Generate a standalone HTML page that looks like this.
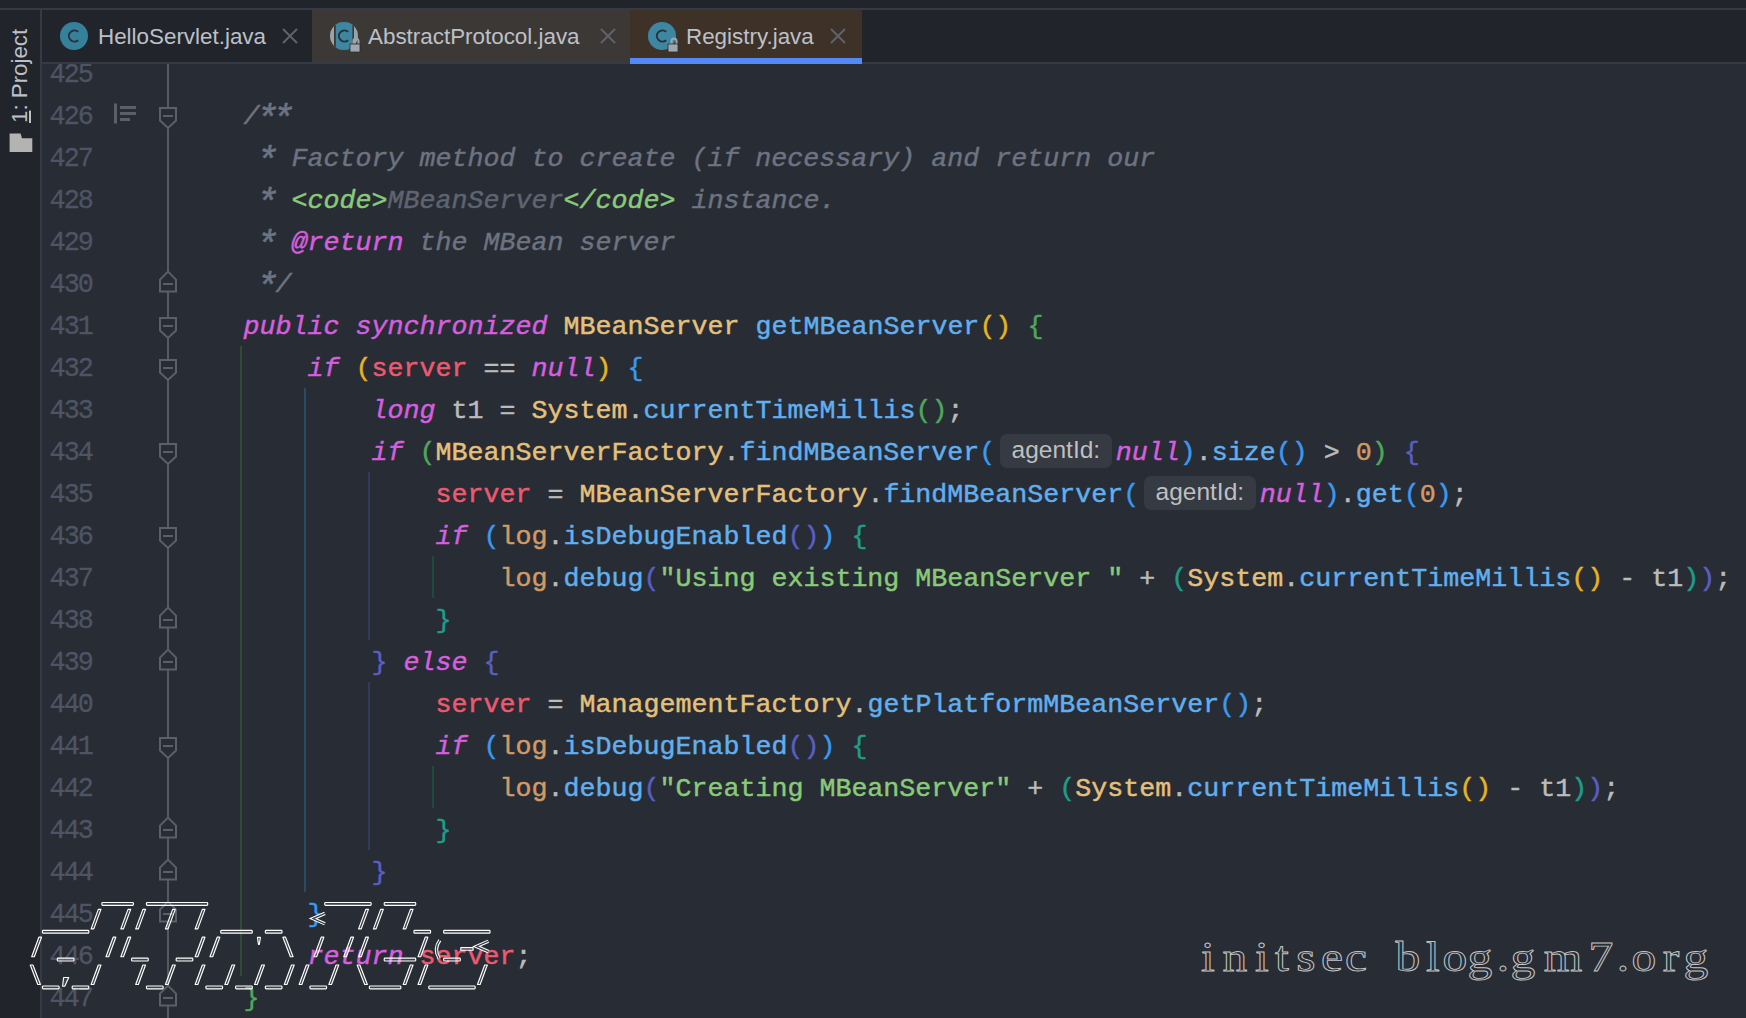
<!DOCTYPE html>
<html><head><meta charset="utf-8">
<style>

html,body{margin:0;padding:0}
body{width:1746px;height:1018px;overflow:hidden;background:#282c34;position:relative;font-family:"Liberation Sans",sans-serif}
.a{position:absolute}
.ln{left:42px;width:50px;text-align:right;font-family:"Liberation Mono",monospace;font-size:26.8px;letter-spacing:-1.9px;color:#4d5464;-webkit-text-stroke:0.3px currentColor;height:42px;line-height:42px}
.code{left:179.5px;height:42px;line-height:42px;font-family:"Liberation Mono",monospace;font-size:26.6667px;white-space:pre;color:#bbbbbb;-webkit-text-stroke:0.45px currentColor}
.kw{color:#d55fde;font-style:italic}
.cm{color:#6d7380;font-style:italic}
.ast{display:inline-block;transform:translateY(3.5px) scale(1.4)}
.cm2{color:#5e6470;font-style:italic}
.cl{color:#e5c07b}
.fn{color:#61afef}
.fd{color:#ef596f}
.st{color:#d19a66}
.num{color:#d19a66}
.str{color:#89ca78}
.tag{color:#89ca78;font-style:italic}
.b1{color:#e6b422}
.b2{color:#4ea85a}
.b3{color:#3a9af0}
.b4{color:#5a5fc4}
.b5{color:#1e9e8a}
.hint{display:inline-block;position:relative;width:120.5px;height:42px;vertical-align:top}
.hint span{position:absolute;left:4.5px;top:2px;width:112px;height:34px;border-radius:7px;background:#353a43;color:#bfbfbf;font-family:"Liberation Sans",sans-serif;font-size:24.5px;line-height:32px;text-align:center;font-style:normal;-webkit-text-stroke:0}
.tabtxt{top:11px;height:52px;line-height:52px;font-size:22.4px;color:#bcc0c9;white-space:pre}

.art{font-family:"Liberation Mono",monospace;font-size:24.67px;line-height:27.9px;white-space:pre;color:#2a2d33;-webkit-text-stroke:1.4px #ffffff}
.wmc{top:0;width:40px;text-align:center;transform:scaleX(1.18);font-family:"Liberation Serif",serif;font-size:42px;line-height:60px;color:rgba(40,44,52,0.2);-webkit-text-stroke:0.9px #c4c4c4}

</style></head><body>
<div class="a ln" style="top:54px">425</div>
<div class="a ln" style="top:96px">426</div>
<div class="a ln" style="top:138px">427</div>
<div class="a ln" style="top:180px">428</div>
<div class="a ln" style="top:222px">429</div>
<div class="a ln" style="top:264px">430</div>
<div class="a ln" style="top:306px">431</div>
<div class="a ln" style="top:348px">432</div>
<div class="a ln" style="top:390px">433</div>
<div class="a ln" style="top:432px">434</div>
<div class="a ln" style="top:474px">435</div>
<div class="a ln" style="top:516px">436</div>
<div class="a ln" style="top:558px">437</div>
<div class="a ln" style="top:600px">438</div>
<div class="a ln" style="top:642px">439</div>
<div class="a ln" style="top:684px">440</div>
<div class="a ln" style="top:726px">441</div>
<div class="a ln" style="top:768px">442</div>
<div class="a ln" style="top:810px">443</div>
<div class="a ln" style="top:852px">444</div>
<div class="a ln" style="top:894px">445</div>
<div class="a ln" style="top:936px">446</div>
<div class="a ln" style="top:978px">447</div>
<div class="a code" style="top:54px"></div>
<div class="a code" style="top:96px"><span class="cm">    /<span class="ast">*</span><span class="ast">*</span></span></div>
<div class="a code" style="top:138px"><span class="cm">     <span class="ast">*</span> Factory method to create (if necessary) and return our</span></div>
<div class="a code" style="top:180px"><span class="cm">     <span class="ast">*</span> </span><span class="tag">&lt;code&gt;</span><span class="cm2">MBeanServer</span><span class="tag">&lt;/code&gt;</span><span class="cm"> instance.</span></div>
<div class="a code" style="top:222px"><span class="cm">     <span class="ast">*</span> </span><span class="kw">@return</span><span class="cm"> the MBean server</span></div>
<div class="a code" style="top:264px"><span class="cm">     <span class="ast">*</span>/</span></div>
<div class="a code" style="top:306px">    <span class="kw">public</span> <span class="kw">synchronized</span> <span class="cl">MBeanServer</span> <span class="fn">getMBeanServer</span><span class="b1">()</span> <span class="b2">{</span></div>
<div class="a code" style="top:348px">        <span class="kw">if</span> <span class="b1">(</span><span class="fd">server</span> == <span class="kw">null</span><span class="b1">)</span> <span class="b3">{</span></div>
<div class="a code" style="top:390px">            <span class="kw">long</span> t1 = <span class="cl">System</span>.<span class="fn">currentTimeMillis</span><span class="b2">()</span>;</div>
<div class="a code" style="top:432px">            <span class="kw">if</span> <span class="b2">(</span><span class="cl">MBeanServerFactory</span>.<span class="fn">findMBeanServer</span><span class="b3">(</span><span class="hint"><span>agentId:</span></span><span class="kw">null</span><span class="b3">)</span>.<span class="fn">size</span><span class="b3">()</span> &gt; <span class="num">0</span><span class="b2">)</span> <span class="b4">{</span></div>
<div class="a code" style="top:474px">                <span class="fd">server</span> = <span class="cl">MBeanServerFactory</span>.<span class="fn">findMBeanServer</span><span class="b3">(</span><span class="hint"><span>agentId:</span></span><span class="kw">null</span><span class="b3">)</span>.<span class="fn">get</span><span class="b3">(</span><span class="num">0</span><span class="b3">)</span>;</div>
<div class="a code" style="top:516px">                <span class="kw">if</span> <span class="b3">(</span><span class="st">log</span>.<span class="fn">isDebugEnabled</span><span class="b4">()</span><span class="b3">)</span> <span class="b5">{</span></div>
<div class="a code" style="top:558px">                    <span class="st">log</span>.<span class="fn">debug</span><span class="b4">(</span><span class="str">"Using existing MBeanServer "</span> + <span class="b5">(</span><span class="cl">System</span>.<span class="fn">currentTimeMillis</span><span class="b1">()</span> - t1<span class="b5">)</span><span class="b4">)</span>;</div>
<div class="a code" style="top:600px">                <span class="b5">}</span></div>
<div class="a code" style="top:642px">            <span class="b4">}</span> <span class="kw">else</span> <span class="b4">{</span></div>
<div class="a code" style="top:684px">                <span class="fd">server</span> = <span class="cl">ManagementFactory</span>.<span class="fn">getPlatformMBeanServer</span><span class="b3">()</span>;</div>
<div class="a code" style="top:726px">                <span class="kw">if</span> <span class="b3">(</span><span class="st">log</span>.<span class="fn">isDebugEnabled</span><span class="b4">()</span><span class="b3">)</span> <span class="b5">{</span></div>
<div class="a code" style="top:768px">                    <span class="st">log</span>.<span class="fn">debug</span><span class="b4">(</span><span class="str">"Creating MBeanServer"</span> + <span class="b5">(</span><span class="cl">System</span>.<span class="fn">currentTimeMillis</span><span class="b1">()</span> - t1<span class="b5">)</span><span class="b4">)</span>;</div>
<div class="a code" style="top:810px">                <span class="b5">}</span></div>
<div class="a code" style="top:852px">            <span class="b4">}</span></div>
<div class="a code" style="top:894px">        <span class="b3">}</span></div>
<div class="a code" style="top:936px">        <span class="kw">return</span> <span class="fd">server</span>;</div>
<div class="a code" style="top:978px">    <span class="b2">}</span></div>
<div class="a" style="left:167px;top:64px;width:2px;height:954px;background:#555a62"></div>
<svg class="a" style="left:0;top:0" width="1746" height="1018">
<path d="M160,108 H176 V120.5 L168,128 L160,120.5 Z" fill="#282c34" stroke="#5b6068" stroke-width="2"/>
<rect x="163" y="115" width="10" height="2" fill="#5b6068"/>
<path d="M160,318 H176 V330.5 L168,338 L160,330.5 Z" fill="#282c34" stroke="#5b6068" stroke-width="2"/>
<rect x="163" y="325" width="10" height="2" fill="#5b6068"/>
<path d="M160,360 H176 V372.5 L168,380 L160,372.5 Z" fill="#282c34" stroke="#5b6068" stroke-width="2"/>
<rect x="163" y="367" width="10" height="2" fill="#5b6068"/>
<path d="M160,444 H176 V456.5 L168,464 L160,456.5 Z" fill="#282c34" stroke="#5b6068" stroke-width="2"/>
<rect x="163" y="451" width="10" height="2" fill="#5b6068"/>
<path d="M160,528 H176 V540.5 L168,548 L160,540.5 Z" fill="#282c34" stroke="#5b6068" stroke-width="2"/>
<rect x="163" y="535" width="10" height="2" fill="#5b6068"/>
<path d="M160,738 H176 V750.5 L168,758 L160,750.5 Z" fill="#282c34" stroke="#5b6068" stroke-width="2"/>
<rect x="163" y="745" width="10" height="2" fill="#5b6068"/>
<path d="M168,271.6 L176,279.6 V291.6 H160 V279.6 Z" fill="#282c34" stroke="#5b6068" stroke-width="2"/>
<rect x="163" y="283" width="10" height="2" fill="#5b6068"/>
<path d="M168,607.6 L176,615.6 V627.6 H160 V615.6 Z" fill="#282c34" stroke="#5b6068" stroke-width="2"/>
<rect x="163" y="619" width="10" height="2" fill="#5b6068"/>
<path d="M168,649.6 L176,657.6 V669.6 H160 V657.6 Z" fill="#282c34" stroke="#5b6068" stroke-width="2"/>
<rect x="163" y="661" width="10" height="2" fill="#5b6068"/>
<path d="M168,817.6 L176,825.6 V837.6 H160 V825.6 Z" fill="#282c34" stroke="#5b6068" stroke-width="2"/>
<rect x="163" y="829" width="10" height="2" fill="#5b6068"/>
<path d="M168,859.6 L176,867.6 V879.6 H160 V867.6 Z" fill="#282c34" stroke="#5b6068" stroke-width="2"/>
<rect x="163" y="871" width="10" height="2" fill="#5b6068"/>
<path d="M168,901.6 L176,909.6 V921.6 H160 V909.6 Z" fill="#282c34" stroke="#5b6068" stroke-width="2"/>
<rect x="163" y="913" width="10" height="2" fill="#5b6068"/>
<path d="M168,985.6 L176,993.6 V1005.6 H160 V993.6 Z" fill="#282c34" stroke="#5b6068" stroke-width="2"/>
<rect x="163" y="997" width="10" height="2" fill="#5b6068"/>
<rect x="114" y="103.5" width="3" height="20" fill="#5b6068"/>
<rect x="120" y="106" width="16" height="3" fill="#5b6068"/>
<rect x="120" y="112" width="16" height="3" fill="#5b6068"/>
<rect x="120" y="118" width="10" height="3" fill="#5b6068"/>
<rect x="240" y="346" width="2" height="630" fill="#304a36"/>
<rect x="304" y="388" width="2" height="504" fill="#2b4a63"/>
<rect x="368" y="472" width="2" height="168" fill="#33395a"/>
<rect x="368" y="682" width="2" height="168" fill="#33395a"/>
<rect x="432" y="556" width="2" height="42" fill="#21483f"/>
<rect x="432" y="766" width="2" height="42" fill="#21483f"/>
</svg>

<div class="a" style="left:0;top:0;width:1746px;height:8px;background:#21252b"></div>
<div class="a" style="left:0;top:8px;width:1746px;height:2px;background:#363a44"></div>
<div class="a" style="left:0;top:10px;width:40px;height:1008px;background:#21252b"></div>
<div class="a" style="left:40px;top:10px;width:2px;height:1008px;background:#363a44"></div>
<div class="a" style="left:42px;top:10px;width:1704px;height:52px;background:#21252b"></div>
<div class="a" style="left:42px;top:62px;width:1704px;height:2px;background:#363a44"></div>
<div class="a" style="left:312px;top:10px;width:318px;height:52px;background:#3b3835"></div>
<div class="a" style="left:630px;top:10px;width:232px;height:52px;background:#3d3128"></div>
<div class="a" style="left:630px;top:58px;width:232px;height:6px;background:#548af7"></div>
<div class="a tabtxt" style="left:98px">HelloServlet.java</div>
<div class="a tabtxt" style="left:368px">AbstractProtocol.java</div>
<div class="a tabtxt" style="left:686px">Registry.java</div>
<svg class="a" style="left:0;top:0" width="1746" height="64">
 <g stroke="#5f6369" stroke-width="2">
  <path d="M283,29 L297,43 M297,29 L283,43"/>
  <path d="M601,29 L615,43 M615,29 L601,43"/>
  <path d="M831,29 L845,43 M845,29 L831,43"/>
 </g>
 <!-- tab1 icon -->
 <circle cx="74" cy="36" r="14" fill="#35819c"/>
 <path d="M78.2,31.8 A5.6,5.6 0 1 0 78.2,40.2" fill="none" stroke="#2b3036" stroke-width="2"/>
 <!-- tab2 icon abstract -->
 <clipPath id="cp2"><circle cx="344" cy="36" r="14"/></clipPath>
 <g clip-path="url(#cp2)">
  <rect x="329" y="21" width="30" height="30" fill="#9aa3a9"/>
  <rect x="334" y="21" width="20" height="30" fill="#3b3835"/>
  <rect x="335.8" y="21" width="16.6" height="30" fill="#3d87a2"/>
 </g>
 <path d="M348.2,31.8 A5.6,5.6 0 1 0 348.2,40.2" fill="none" stroke="#2b3036" stroke-width="2"/>
 <path d="M353.5,44 V41 A2.5,2.5 0 0 1 358.5,41 V44" fill="none" stroke="#9ea7ae" stroke-width="2"/>
 <rect x="350" y="44" width="10" height="8" fill="#9ea7ae" stroke="#2d2d2d" stroke-width="0.8"/>
 <!-- tab3 icon -->
 <circle cx="662" cy="36" r="14" fill="#3d87a2"/>
 <path d="M666.2,31.8 A5.6,5.6 0 1 0 666.2,40.2" fill="none" stroke="#2b3036" stroke-width="2"/>
 <path d="M671.5,44 V41 A2.5,2.5 0 0 1 676.5,41 V44" fill="none" stroke="#9ea7ae" stroke-width="2"/>
 <rect x="668" y="44" width="10" height="8" fill="#9ea7ae" stroke="#2d2d2d" stroke-width="0.8"/>
</svg>
<div class="a" style="left:6.5px;top:123px;width:100px;height:26px;line-height:26px;transform-origin:0 0;transform:rotate(-90deg);font-size:22.3px;color:#bcc0c9;white-space:pre"><span style="text-decoration:underline">1</span>: Project</div>
<svg class="a" style="left:0;top:120px" width="40" height="40">
 <path d="M9.6,13.5 H20.6 L22,18.3 H32.3 V32 H9.6 Z" fill="#b3b3b3"/>
</svg>

<svg class="a" style="left:0;top:0" width="1746" height="1018">
<g fill="rgba(255,255,255,0.10)" stroke="#ffffff" stroke-width="1.15" stroke-linejoin="round">
<rect x="101.88" y="902.48" width="31.51" height="2.85" rx="0.8"/>
<rect x="146.45" y="902.48" width="61.23" height="2.85" rx="0.8"/>
<rect x="324.77" y="902.48" width="46.37" height="2.85" rx="0.8"/>
<rect x="384.21" y="902.48" width="31.51" height="2.85" rx="0.8"/>
<rect x="42.44" y="930.33" width="46.37" height="2.85" rx="0.8"/>
<polygon points="91.11,928.92 93.77,928.92 100.96,909.38 98.31,909.38"/>
<polygon points="120.83,928.92 123.48,928.92 130.69,909.38 128.03,909.38"/>
<polygon points="135.69,928.92 138.34,928.92 145.54,909.38 142.89,909.38"/>
<polygon points="165.41,928.92 168.07,928.92 175.27,909.38 172.62,909.38"/>
<polygon points="195.13,928.92 197.78,928.92 204.98,909.38 202.33,909.38"/>
<rect x="220.75" y="930.33" width="31.51" height="2.85" rx="0.8"/>
<rect x="265.33" y="930.33" width="16.65" height="2.85" rx="0.8"/>
<path d="M324.94,913.40 L312.94,918.60 L324.94,923.80" fill="none" stroke="#ffffff" stroke-width="3.4" stroke-linejoin="miter"/>
<path d="M324.94,913.40 L312.94,918.60 L324.94,923.80" fill="none" stroke="#3b3f48" stroke-width="1.3" stroke-linejoin="miter"/>
<polygon points="358.59,928.92 361.24,928.92 368.44,909.38 365.79,909.38"/>
<polygon points="373.45,928.92 376.10,928.92 383.31,909.38 380.65,909.38"/>
<polygon points="403.18,928.92 405.82,928.92 413.03,909.38 410.38,909.38"/>
<rect x="413.94" y="930.33" width="16.65" height="2.85" rx="0.8"/>
<rect x="443.65" y="930.33" width="46.37" height="2.85" rx="0.8"/>
<polygon points="31.68,956.73 34.32,956.73 41.52,937.18 38.88,937.18"/>
<rect x="57.30" y="958.18" width="16.65" height="2.85" rx="0.8"/>
<polygon points="105.97,956.73 108.62,956.73 115.82,937.18 113.17,937.18"/>
<polygon points="120.83,956.73 123.48,956.73 130.69,937.18 128.03,937.18"/>
<rect x="131.59" y="958.18" width="16.65" height="2.85" rx="0.8"/>
<rect x="176.17" y="958.18" width="16.65" height="2.85" rx="0.8"/>
<polygon points="195.13,956.73 197.78,956.73 204.98,937.18 202.33,937.18"/>
<polygon points="209.99,956.73 212.65,956.73 219.84,937.18 217.19,937.18"/>
<polygon points="257.47,937.38 260.43,937.38 259.32,944.42 258.47,944.42"/>
<polygon points="282.89,937.18 285.55,937.18 293.05,956.73 290.39,956.73"/>
<polygon points="314.01,956.73 316.66,956.73 323.87,937.18 321.21,937.18"/>
<polygon points="343.74,956.73 346.38,956.73 353.59,937.18 350.94,937.18"/>
<polygon points="358.59,956.73 361.24,956.73 368.44,937.18 365.79,937.18"/>
<rect x="384.21" y="958.18" width="31.51" height="2.85" rx="0.8"/>
<polygon points="418.04,956.73 420.69,956.73 427.89,937.18 425.24,937.18"/>
<path d="M439.82,940.20 Q433.22,949.40 439.22,958.60" fill="none" stroke="#ffffff" stroke-width="3.4"/>
<path d="M439.82,940.20 Q433.22,949.40 439.22,958.60" fill="none" stroke="#3b3f48" stroke-width="1.3"/>
<rect x="443.65" y="958.18" width="16.65" height="2.85" rx="0.8"/>
<rect x="460.81" y="947.58" width="12.25" height="2.65"/>
<path d="M488.40,941.20 L476.40,946.40 L488.40,951.60" fill="none" stroke="#ffffff" stroke-width="3.4" stroke-linejoin="miter"/>
<path d="M488.40,941.20 L476.40,946.40 L488.40,951.60" fill="none" stroke="#3b3f48" stroke-width="1.3" stroke-linejoin="miter"/>
<polygon points="30.27,964.98 32.92,964.98 40.42,984.52 37.78,984.52"/>
<rect x="42.44" y="986.03" width="16.65" height="2.85" rx="0.8"/>
<polygon points="63.59,977.53 68.74,977.53 64.74,986.27 62.59,986.27"/>
<rect x="72.16" y="986.03" width="16.65" height="2.85" rx="0.8"/>
<polygon points="91.11,984.52 93.77,984.52 100.96,964.98 98.31,964.98"/>
<polygon points="135.69,984.52 138.34,984.52 145.54,964.98 142.89,964.98"/>
<rect x="146.45" y="986.03" width="16.65" height="2.85" rx="0.8"/>
<polygon points="165.41,984.52 168.07,984.52 175.27,964.98 172.62,964.98"/>
<polygon points="195.13,984.52 197.78,984.52 204.98,964.98 202.33,964.98"/>
<rect x="205.89" y="986.03" width="16.65" height="2.85" rx="0.8"/>
<polygon points="224.85,984.52 227.51,984.52 234.71,964.98 232.06,964.98"/>
<rect x="235.61" y="986.03" width="16.65" height="2.85" rx="0.8"/>
<polygon points="254.57,984.52 257.22,984.52 264.43,964.98 261.77,964.98"/>
<rect x="265.33" y="986.03" width="16.65" height="2.85" rx="0.8"/>
<polygon points="284.30,984.52 286.94,984.52 294.15,964.98 291.50,964.98"/>
<polygon points="299.16,984.52 301.81,984.52 309.01,964.98 306.36,964.98"/>
<rect x="309.91" y="986.03" width="16.65" height="2.85" rx="0.8"/>
<polygon points="328.88,984.52 331.52,984.52 338.73,964.98 336.07,964.98"/>
<polygon points="357.19,964.98 359.84,964.98 367.34,984.52 364.69,984.52"/>
<rect x="369.35" y="986.03" width="31.51" height="2.85" rx="0.8"/>
<polygon points="403.18,984.52 405.82,984.52 413.03,964.98 410.38,964.98"/>
<polygon points="418.04,984.52 420.69,984.52 427.89,964.98 425.24,964.98"/>
<rect x="428.79" y="986.03" width="46.37" height="2.85" rx="0.8"/>
<polygon points="477.47,984.52 480.12,984.52 487.32,964.98 484.67,964.98"/>
</g></svg>
<div class="a" style="left:0;top:927px;width:1746px;height:60px"><span class="a wmc" style="left:1188.3px">i</span><span class="a wmc" style="left:1215.1px">n</span><span class="a wmc" style="left:1241.6px">i</span><span class="a wmc" style="left:1262.0px">t</span><span class="a wmc" style="left:1286.1px">s</span><span class="a wmc" style="left:1311.6px">e</span><span class="a wmc" style="left:1336.0px">c</span><span class="a wmc" style="left:1388.0px">b</span><span class="a wmc" style="left:1412.6px">l</span><span class="a wmc" style="left:1435.3px">o</span><span class="a wmc" style="left:1460.3px">g</span><span class="a wmc" style="left:1483.0px">.</span><span class="a wmc" style="left:1503.2px">g</span><span class="a wmc" style="left:1542.7px">m</span><span class="a wmc" style="left:1581.3px">7</span><span class="a wmc" style="left:1603.0px">.</span><span class="a wmc" style="left:1624.2px">o</span><span class="a wmc" style="left:1651.0px">r</span><span class="a wmc" style="left:1676.0px">g</span></div>
</body></html>
